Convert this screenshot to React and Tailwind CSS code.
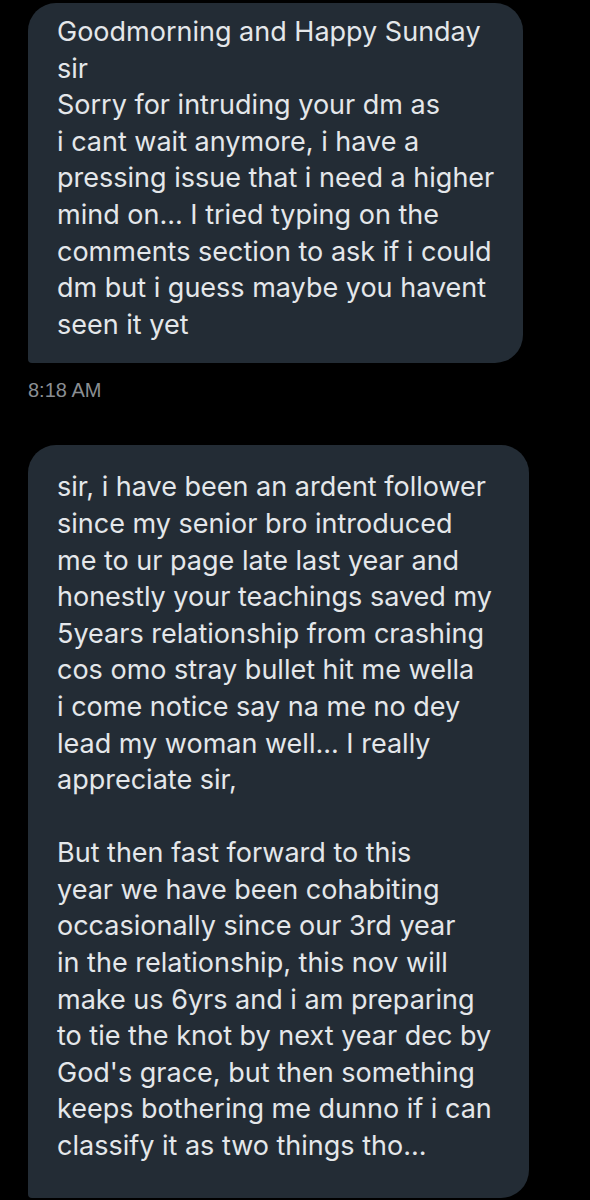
import React from "react";

const msg1 = [
  "Goodmorning and Happy Sunday",
  "sir",
  "Sorry for intruding your dm as",
  "i cant wait anymore, i have a",
  "pressing issue that i need a higher",
  "mind on... I tried typing on the",
  "comments section to ask if i could",
  "dm but i guess maybe you havent",
  "seen it yet",
];

const msg2 = [
  "sir, i have been an ardent follower",
  "since my senior bro introduced",
  "me to ur page late last year and",
  "honestly your teachings saved my",
  "5years relationship from crashing",
  "cos omo stray bullet hit me wella",
  "i come notice say na me no dey",
  "lead my woman well... I really",
  "appreciate sir,",
  "",
  "But then fast forward to this",
  "year we have been cohabiting",
  "occasionally since our 3rd year",
  "in the relationship, this nov will",
  "make us 6yrs and i am preparing",
  "to tie the knot by next year dec by",
  "God's grace, but then something",
  "keeps bothering me dunno if i can",
  "classify it as two things tho...",
];

function Lines({ lines }) {
  return lines.map((l, i) => (
    <div key={i} className="h-[36.6px] whitespace-nowrap">
      {l || "\u00a0"}
    </div>
  ));
}

export default function App() {
  return (
    <div className="flex h-[1200px] flex-col items-start overflow-hidden bg-black pt-[3px] pl-[28px]">
      <div className="w-[495px] rounded-[28px] rounded-bl-[4px] bg-[#232c35] pl-[29px] pt-[11px] pb-[20px] font-['Inter','Noto_Sans',sans-serif] text-[27px] leading-[36.6px] text-[#e4e7ea]">
        <Lines lines={msg1} />
      </div>
      <div className="mt-[15px] h-[24px] font-['Liberation_Sans',Arial,sans-serif] text-[20px] leading-[24px] text-[#8a8e93]">
        8:18 AM
      </div>
      <div className="mt-[43px] w-[501px] rounded-[28px] rounded-bl-[4px] bg-[#232c35] pl-[29px] pt-[24px] pb-[33px] font-['Inter','Noto_Sans',sans-serif] text-[27px] leading-[36.6px] text-[#e4e7ea]">
        <Lines lines={msg2} />
      </div>
    </div>
  );
}
